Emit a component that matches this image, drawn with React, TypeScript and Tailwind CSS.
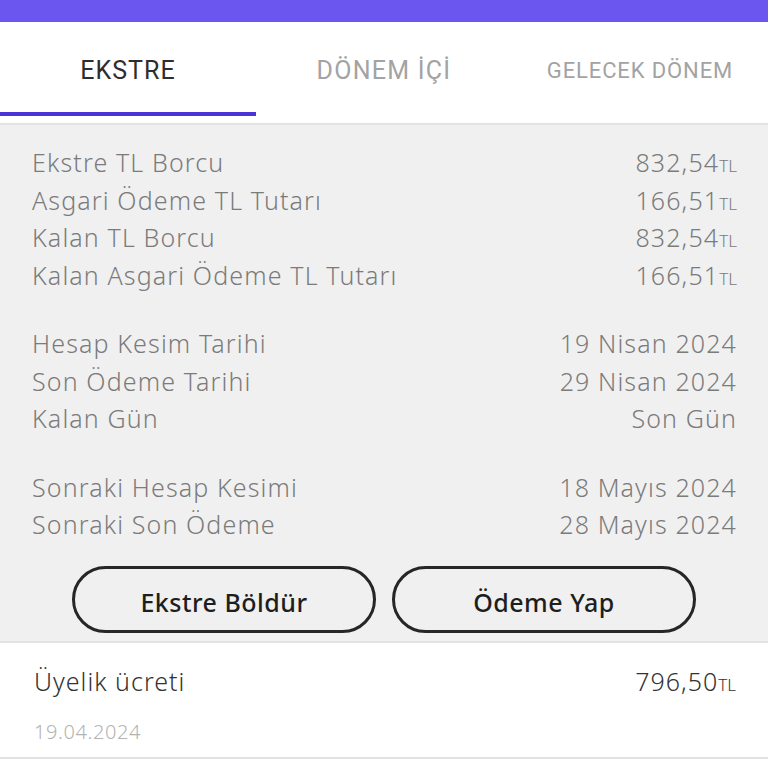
const rowFont = { fontFamily: "'Noto Sans', Lato, sans-serif" };

type Row = { label: string; value: string; tl?: boolean };

const groups: Row[][] = [
  [
    { label: "Ekstre TL Borcu", value: "832,54", tl: true },
    { label: "Asgari Ödeme TL Tutarı", value: "166,51", tl: true },
    { label: "Kalan TL Borcu", value: "832,54", tl: true },
    { label: "Kalan Asgari Ödeme TL Tutarı", value: "166,51", tl: true },
  ],
  [
    { label: "Hesap Kesim Tarihi", value: "19 Nisan 2024" },
    { label: "Son Ödeme Tarihi", value: "29 Nisan 2024" },
    { label: "Kalan Gün", value: "Son Gün" },
  ],
  [
    { label: "Sonraki Hesap Kesimi", value: "18 Mayıs 2024" },
    { label: "Sonraki Son Ödeme", value: "28 Mayıs 2024" },
  ],
];

const tabs = ["EKSTRE", "DÖNEM İÇİ", "GELECEK DÖNEM"];

export default function App() {
  return (
    <div className="flex h-[768px] w-[768px] flex-col overflow-hidden bg-white" style={rowFont}>
      <div className="h-[22px] shrink-0 bg-[#6b56f0]" />

      <div className="grid h-[101px] shrink-0 grid-cols-3 bg-white" style={{ fontFamily: "Roboto, sans-serif" }}>
        {tabs.map((t, i) => (
          <div key={t} className="relative flex items-center justify-center pb-[4px]">
            <span
              className={
                i === 0
                  ? "text-[25px] tracking-[0.04em] text-[#2e2e2e]"
                  : i === 1
                  ? "text-[25px] tracking-[0.05em] text-[#a3a3a3]"
                  : "text-[22px] tracking-[0.04em] text-[#a3a3a3]"
              }
            >
              {t}
            </span>
            {i === 0 && <div className="absolute bottom-[7px] left-0 h-[4px] w-full bg-[#4a34d6]" />}
          </div>
        ))}
      </div>

      <div className="shrink-0 border-t-2 border-b-2 border-[#e2e2e2] bg-[#f0f0f0] px-[32px] pt-[19px] pb-[8px]">
        <div className="flex flex-col gap-[31px]">
          {groups.map((g, gi) => (
            <div key={gi} className="flex flex-col">
              {g.map((r) => (
                <div
                  key={r.label}
                  className="flex h-[37.5px] items-center justify-between text-[25px] font-light tracking-[0.045em] text-[#7b7b7b]"
                >
                  <span>{r.label}</span>
                  <span className="mr-[-1px]">
                    {r.value}
                    {r.tl && <span className="text-[17px] tracking-normal">TL</span>}
                  </span>
                </div>
              ))}
            </div>
          ))}
        </div>

        <div className="mt-[22px] flex justify-center gap-[16px]">
          <button className="flex h-[67px] w-[304px] items-center justify-center rounded-full border-[3px] border-[#262626] pt-[8px] text-[25px] font-medium tracking-[0.02em] text-[#1e1e1e]">
            Ekstre Böldür
          </button>
          <button className="flex h-[67px] w-[304px] items-center justify-center rounded-full border-[3px] border-[#262626] pt-[8px] text-[25px] font-medium tracking-[0.02em] text-[#1e1e1e]">
            Ödeme Yap
          </button>
        </div>
      </div>

      <div className="flex shrink-0 flex-col border-b-2 border-[#e2e2e2] px-[34px] pt-[20px] pb-[10px]">
        <div className="flex h-[38px] items-center justify-between text-[25px] font-light tracking-[0.04em] text-[#333333]">
          <span>Üyelik ücreti</span>
          <span className="mr-[-2px]">
            796,50<span className="text-[17px] tracking-normal">TL</span>
          </span>
        </div>
        <div className="mt-[16px] flex h-[30px] items-center text-[20px] font-light tracking-[0.03em] text-[#b3b3b3]">
          19.04.2024
        </div>
      </div>
    </div>
  );
}
